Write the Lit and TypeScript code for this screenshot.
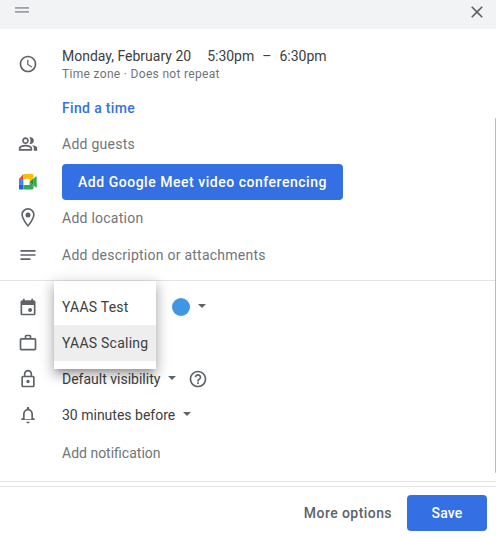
import { LitElement, html, css, svg, TemplateResult } from "lit";
import { customElement, property } from "lit/decorators.js";

const ICONS: Record<string, TemplateResult> = {
  clock: svg`<path d="M11.99 2C6.47 2 2 6.48 2 12s4.47 10 9.99 10C17.52 22 22 17.52 22 12S17.52 2 11.99 2zM12 20c-4.42 0-8-3.58-8-8s3.58-8 8-8 8 3.58 8 8-3.58 8-8 8zm.5-13H11v6l5.25 3.15.75-1.23-4.5-2.67z"/>`,
  guests: svg`<path d="M15 8c0-1.42-.5-2.73-1.33-3.76.42-.14.86-.24 1.33-.24 2.21 0 4 1.79 4 4s-1.79 4-4 4c-.43 0-.84-.09-1.23-.21-.03-.01-.06-.02-.1-.03A5.98 5.98 0 0 0 15 8zm1.66 5.13C18.03 14.06 19 15.32 19 17v3h4v-3c0-2.18-3.58-3.47-6.34-3.87zM9 6c-1.1 0-2 .9-2 2s.9 2 2 2 2-.9 2-2-.9-2-2-2m0-2c2.21 0 4 1.79 4 4s-1.79 4-4 4-4-1.790-4-4 1.790-4 4-4zm0 11c-2.700 0-5.800 1.290-6 2.010V18h12v-1c-.2-.71-3.300-2-6-2m0-2c2.670 0 8 1.340 8 4v3H1v-3c0-2.660 5.330-4 8-4z"/>`,
  place: svg`<path d="M12 0C7.600 0 4 3.550 4 7.900 4 13.800 12 23 12 23s8-9.200 8-15.100C20 3.550 16.400 0 12 0zm0 2c3.300 0 6 2.650 6 5.900 0 3.500-3.300 8.700-6 12.100-2.700-3.400-6-8.600-6-12.100C6 4.650 8.700 2 12 2z"/><circle cx="12" cy="8.300" r="3"/>`,
  notes: svg`<path d="M3 6h18v2H3zM3 11h18v2H3zM3 16h12v2H3z"/>`,
  calendar: svg`<path d="M19 4h-1V2h-2v2H8V2H6v2H5c-1.110 0-2 .9-2 2v14c0 1.100.89 2 2 2h14c1.100 0 2-.9 2-2V6c0-1.100-.9-2-2-2zm0 16H5V9.500h14V20z"/><circle cx="14.500" cy="15.500" r="2.400"/>`,
  work: svg`<path d="M14 6V4h-4v2h4zM4 8v11h16V8H4zm16-2c1.110 0 2 .89 2 2v11c0 1.110-.89 2-2 2H4c-1.110 0-2-.89-2-2V8c0-1.110.89-2 2-2h4V4c0-1.110.89-2 2-2h4c1.110 0 2 .89 2 2v2h4z"/>`,
  lock: svg`<path d="M18 8h-1V6c0-2.760-2.240-5-5-5S7 3.240 7 6v2H6c-1.100 0-2 .9-2 2v10c0 1.100.9 2 2 2h12c1.100 0 2-.9 2-2V10c0-1.100-.9-2-2-2zM9 6c0-1.660 1.340-3 3-3s3 1.340 3 3v2H9V6zm9 14H6V10h12v10zm-6-3c1.100 0 2-.9 2-2s-.9-2-2-2-2 .9-2 2 .9 2 2 2z"/>`,
  bell: svg`<path d="M12 22c1.100 0 2-.9 2-2h-4c0 1.100.9 2 2 2zm6-6v-5c0-3.070-1.630-5.640-4.500-6.320V4c0-.83-.67-1.500-1.500-1.500s-1.500.67-1.500 1.500v.68C7.640 5.360 6 7.920 6 11v5H4v2h16v-2h-2zm-2 1H8v-6c0-2.480 1.510-4.500 4-4.500s4 2.020 4 4.500v6z"/>`,
  help: svg`<path d="M11 18h2v-2h-2v2zm1-16C6.480 2 2 6.480 2 12s4.480 10 10 10 10-4.480 10-10S17.520 2 12 2zm0 18c-4.410 0-8-3.590-8-8s3.590-8 8-8 8 3.590 8 8-3.590 8-8 8zm0-14c-2.210 0-4 1.790-4 4h2c0-1.100.9-2 2-2s2 .9 2 2c0 2-3 1.750-3 5h2c0-2.250 3-2.500 3-5 0-2.210-1.790-4-4-4z"/>`,
  close: svg`<path d="M19 6.410L17.590 5 12 10.590 6.410 5 5 6.410 10.590 12 5 17.590 6.410 19 12 13.410 17.590 19 19 17.590 13.410 12z"/>`,
  caret: svg`<path d="M7.200 9.700l4.800 4.800 4.800-4.800z"/>`,
  handle: svg`<path d="M3.600 8.400h16.800v2.100H3.600zM3.600 13.100h16.800v2.100H3.600z"/>`,
};

@customElement("g-icon")
export class GIcon extends LitElement {
  @property() name = "";
  static styles = css`
    :host { display: block; flex: none; width: 20px; height: 20px; }
    svg { display: block; width: 100%; height: 100%; fill: currentColor; }
  `;
  render() {
    return html`<svg viewBox="0 0 24 24">${ICONS[this.name]}</svg>`;
  }
}

@customElement("event-row")
export class EventRow extends LitElement {
  @property() icon = "";
  static styles = css`
    :host { display: flex; align-items: center; height: 36px; padding-left: 18px; box-sizing: border-box; }
    .lead { width: 44px; flex: none; color: #5f6368; }
  `;
  render() {
    return html`
      <div class="lead">${this.icon ? html`<g-icon name=${this.icon}></g-icon>` : ""}<slot name="lead"></slot></div>
      <slot></slot>`;
  }
}

@customElement("app-root")
export class AppRoot extends LitElement {
  static styles = css`
    :host {
      display: flex; flex-direction: column; position: relative; box-sizing: border-box;
      width: 496px; height: 538px; overflow: hidden; background: #fff; color: #3c4043;
      font: 400 14px/20px Roboto, "Liberation Sans", sans-serif; letter-spacing: 0; white-space: nowrap;
    }
    .bar { display: flex; justify-content: space-between; height: 29px; flex: none; background: #f1f3f4; padding: 0 9px 0 12px; box-sizing: border-box; }
    .handle { color: #9aa0a6; }
    .close { color: #5f6368; margin-top: 2px; }
    .time { height: 35px; margin-top: 17px; align-items: center; }
    .when { display: flex; }
    .start { margin-left: 16px; }
    .dash { margin: 0 8px; }
    .sub { font-size: 12px; line-height: 16px; letter-spacing: 0.32px; color: #70757a; }
    .find { margin-top: 9px; color: #3371e3; font-weight: 500; letter-spacing: 0.34px; }
    .muted { color: #70757a; }
    .wide { letter-spacing: 0.25px; }
    .meet-row { margin: 2px 0 0; }
    .meet { display: block; width: 20px; height: 16px; }
    .btn { display: flex; align-items: center; justify-content: center; box-sizing: border-box; height: 36px; border-radius: 4px; background: #3470e4; color: #fff; font-weight: 500; }
    .conf { width: 281px; letter-spacing: 0.52px; }
    .desc { margin-top: 1px; }
    .rule { height: 1px; flex: none; background: #e1e3e5; }
    .r1 { margin-top: 7px; }
    .r2 { margin-top: 10px; }
    .cal { margin-top: 8px; }
    .swatch { width: 18px; height: 18px; border-radius: 50%; background: #4096e2; margin-left: 110px; }
    .caret { color: #5f6368; margin-left: 2px; margin-bottom: 2px; }
    .help { color: #5f6368; margin-left: 6px; }
    .add { margin-top: 2px; }
    .foot { display: flex; align-items: center; justify-content: flex-end; height: 52px; margin-top: 4px; flex: none; box-sizing: border-box; border-top: 1px solid #e1e3e5; padding: 1px 9px 0 0; gap: 15px; }
    .more { color: #5f6368; font-weight: 500; letter-spacing: 0.43px; }
    .save { width: 80px; letter-spacing: 0.2px; }
    .menu { position: absolute; left: 54px; top: 281px; width: 102px; height: 88px; box-sizing: border-box; padding: 8px 0; background: #fff; box-shadow: 0 5px 5px -3px rgba(0,0,0,.2), 0 6px 10px 1px rgba(0,0,0,.18), 0 3px 14px 2px rgba(0,0,0,.14); }
    .item { height: 36px; line-height: 36px; padding-left: 8px; letter-spacing: 0.24px; }
    .active { background: #eee; }
    .scroll { position: absolute; left: 495px; top: 118px; width: 3px; height: 355px; border-radius: 1px; background: #bababa; }
  `;

  render() {
    return html`
      <div class="bar">
        <g-icon class="handle" name="handle"></g-icon>
        <g-icon class="close" name="close"></g-icon>
      </div>
      <event-row class="time" icon="clock">
        <div>
          <div class="when"><span>Monday, February 20</span><span class="start">5:30pm</span><span class="dash">–</span><span>6:30pm</span></div>
          <div class="sub">Time zone · Does not repeat</div>
        </div>
      </event-row>
      <event-row class="find">Find a time</event-row>
      <event-row class="muted wide" icon="guests">Add guests</event-row>
      <event-row class="meet-row">
        <svg class="meet" slot="lead" viewBox="0 0 20 16">
          <path fill="#ea4335" d="M5.400 0v5H1z"/>
          <path fill="#4285f4" d="M1 5h4.400v6H1z"/>
          <path fill="#1967d2" d="M1 11h4.400v4.500H2.200Q1 15.500 1 14.300z"/>
          <path fill="#fbbc04" d="M5.400 0h8.700q1.400 0 1.400 1.400v3.500L11.600 8V4.800H5.400z"/>
          <path fill="#34a853" d="M5.400 11h6.200V8l3.900 3.300v2.800q0 1.400-1.400 1.400H5.400zM15.500 4.900l2.300-2.400q.9-.6.900.5v9.900q0 1.100-.9.500l-2.300-2.100z"/>
          <path fill="#1e8e3e" d="M11.600 8l3.900-3.400v6.700z"/>
        </svg>
        <div class="btn conf">Add Google Meet video conferencing</div>
      </event-row>
      <event-row class="muted wide" icon="place">Add location</event-row>
      <event-row class="muted wide desc" icon="notes">Add description or attachments</event-row>
      <div class="rule r1"></div>
      <event-row class="cal" icon="calendar">
        <div class="swatch"></div><g-icon class="caret" name="caret"></g-icon>
      </event-row>
      <event-row icon="work"></event-row>
      <event-row icon="lock">Default visibility<g-icon class="caret" name="caret"></g-icon><g-icon class="help" name="help"></g-icon></event-row>
      <event-row icon="bell">30 minutes before<g-icon class="caret" name="caret"></g-icon></event-row>
      <event-row class="muted add">Add notification</event-row>
      <div class="rule r2"></div>
      <div class="foot"><span class="more">More options</span><div class="btn save">Save</div></div>
      <div class="menu"><div class="item">YAAS Test</div><div class="item active">YAAS Scaling</div></div>
      <div class="scroll"></div>
    `;
  }
}
